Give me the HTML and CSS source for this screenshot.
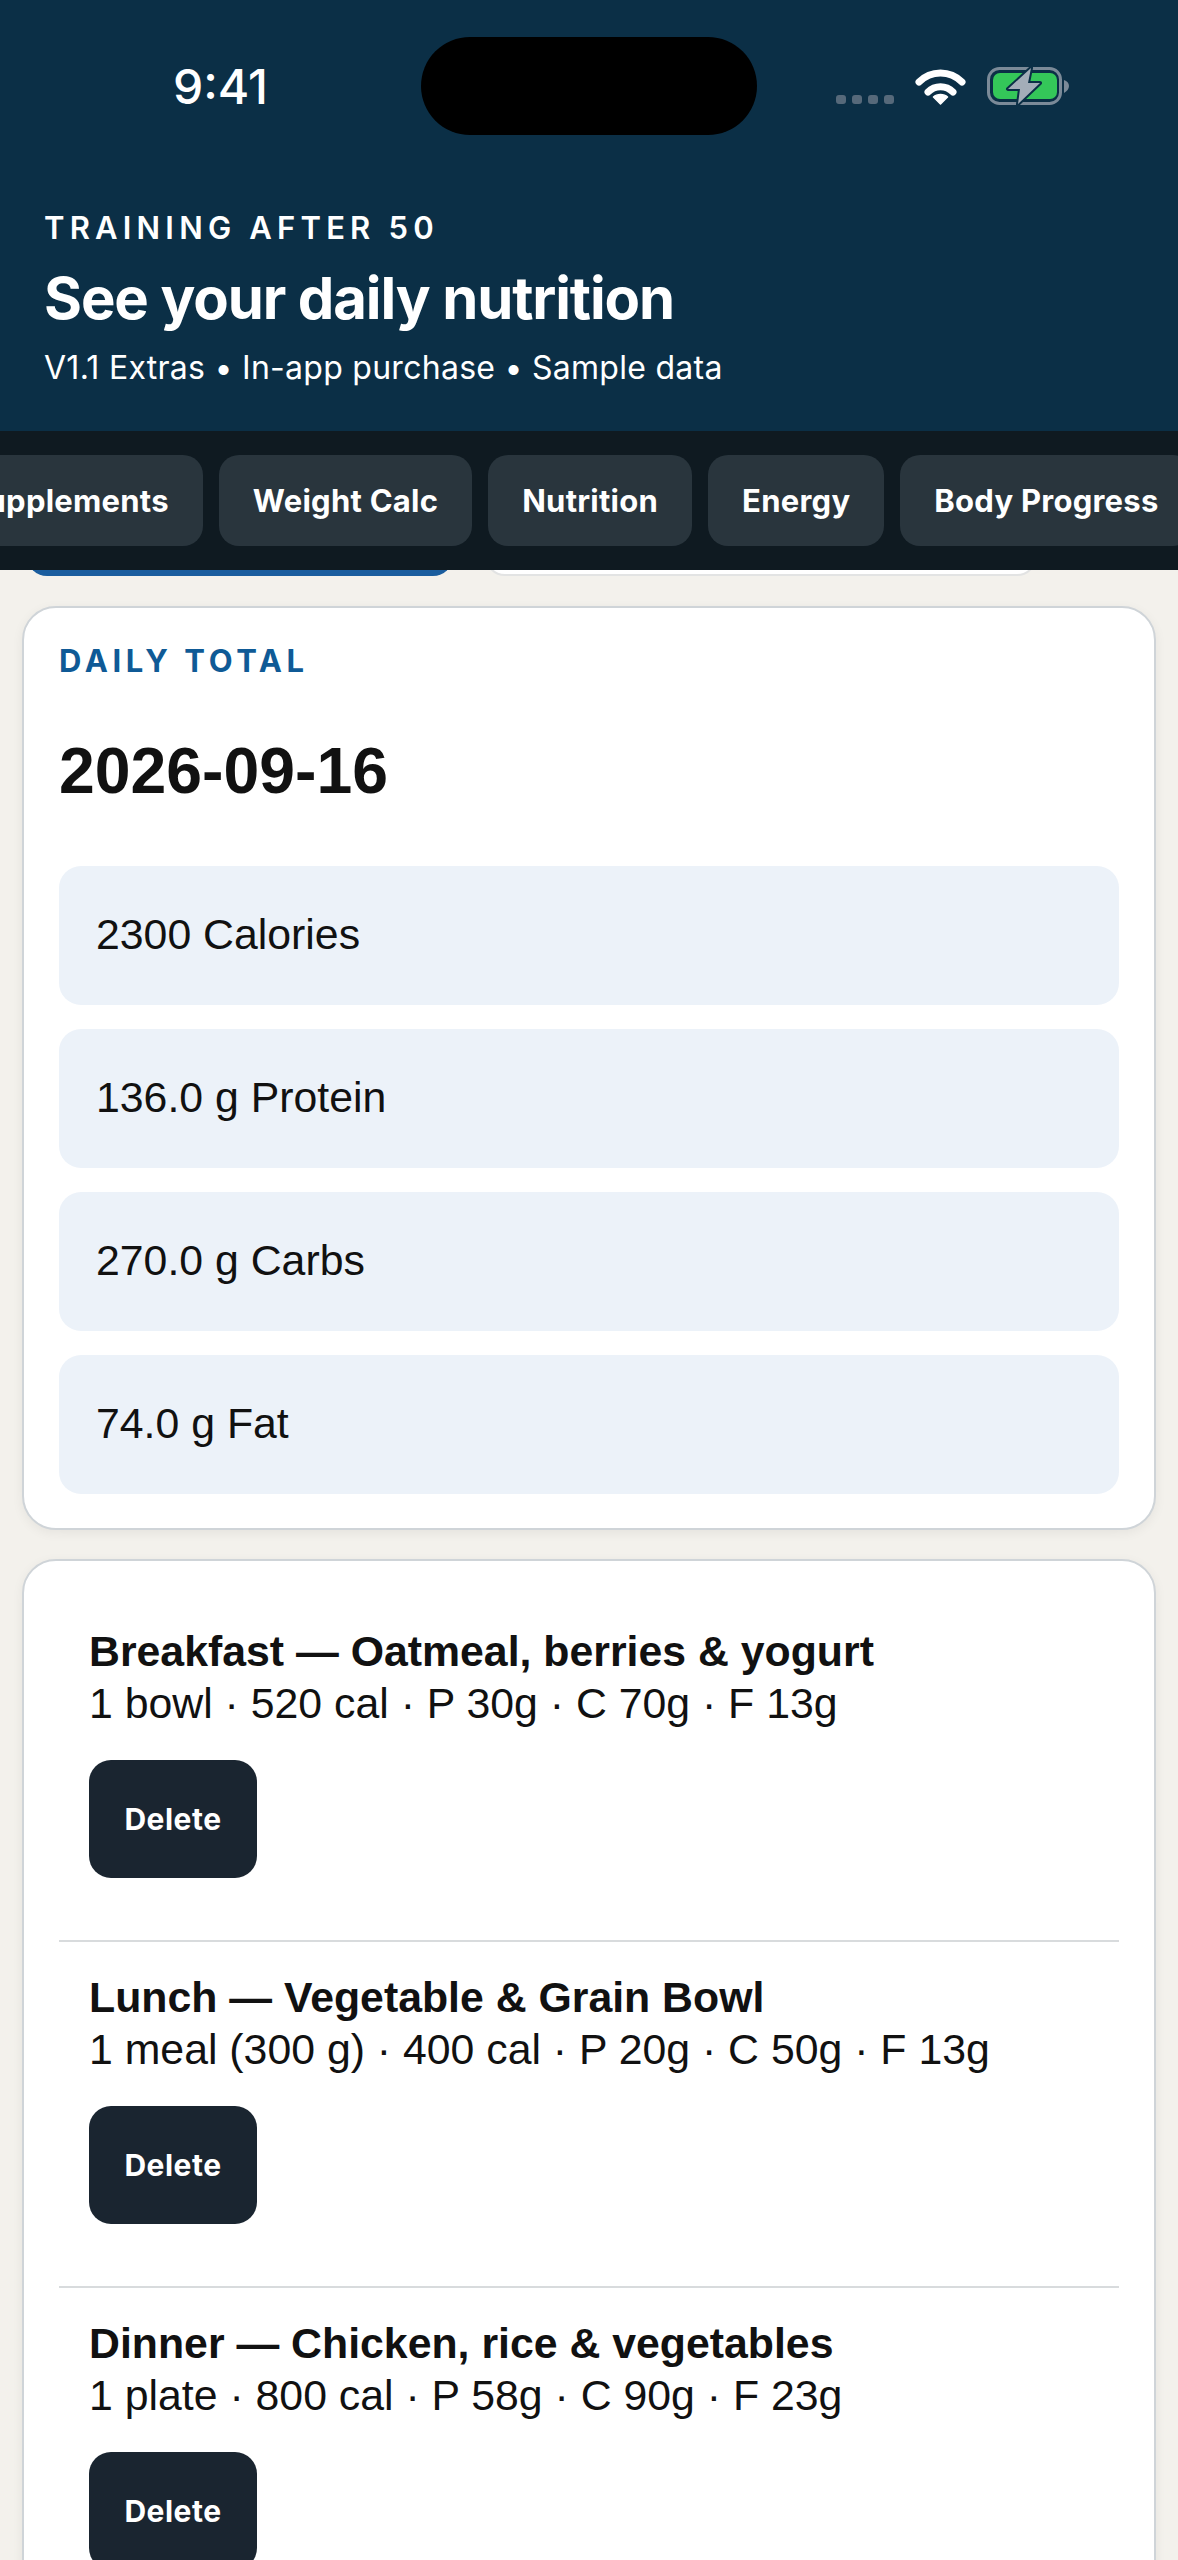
FILE: index.html
```html
<!DOCTYPE html>
<html lang="en">
<head>
    <meta charset="UTF-8">
    <meta name="viewport" content="width=device-width, initial-scale=1.0">
    <title>Training After 50</title>
    <link rel="stylesheet" href="styles.css">
</head>
<body>

<header class="hero">
    <div class="status-bar">
        <span class="status-time">9:41</span>
        <div class="status-island"></div>
        <div class="status-icons">
            <div class="signal-dots"><i></i><i></i><i></i><i></i></div>
            <svg class="wifi-icon" width="51" height="38" viewBox="0 0 51 38">
                <path d="M4 15 C16 3 35 3 47 15" fill="none" stroke="#fff" stroke-width="7" stroke-linecap="round"/>
                <path d="M13 25 C20 18 31 18 38 25" fill="none" stroke="#fff" stroke-width="7" stroke-linecap="round"/>
                <path d="M25.5 37 L18.5 30 C22 26.500 29 26.500 32.500 30 Z" fill="#fff" stroke="#fff" stroke-width="1.500" stroke-linejoin="round"/>
            </svg>
            <svg class="battery-icon" width="82" height="38" viewBox="0 0 82 38">
                <rect x="1.500" y="1.500" width="72" height="35" rx="11" fill="none" stroke="#7b8a98" stroke-width="3"/>
                <rect x="6" y="6" width="64" height="26" rx="7" fill="#34c759"/>
                <path d="M77 13 C80 14 82 16 82 19 C82 22 80 24 77 26 Z" fill="#7b8a98"/>
                <path d="M44 1 L21 22 L33 22 L31 37 L53 16 L41 16 Z" fill="#a3adb8" stroke="#0b2f46" stroke-width="4" stroke-linejoin="round" paint-order="stroke"/>
            </svg>
        </div>
    </div>
    <p class="hero-eyebrow">TRAINING AFTER 50</p>
    <h1 class="hero-title">See your daily nutrition</h1>
    <p class="hero-sub">V1.1 Extras • In-app purchase • Sample data</p>
</header>

<nav class="tabs">
    <div class="tab-track">
        <a class="tab">Supplements</a>
        <a class="tab">Weight Calc</a>
        <a class="tab">Nutrition</a>
        <a class="tab">Energy</a>
        <a class="tab">Body Progress</a>
    </div>
</nav>

<div class="peek-row">
    <div class="peek-primary"></div>
    <div class="peek-secondary"></div>
</div>

<main class="content">
    <section class="card">
        <p class="card-label">DAILY TOTAL</p>
        <h2 class="card-date">2026-09-16</h2>
        <div class="stat-list">
            <div class="stat-row">2300 Calories</div>
            <div class="stat-row">136.0 g Protein</div>
            <div class="stat-row">270.0 g Carbs</div>
            <div class="stat-row">74.0 g Fat</div>
        </div>
    </section>

    <section class="card meal-card">
        <div class="meal">
            <div class="meal-name">Breakfast — Oatmeal, berries &amp; yogurt</div>
            <div class="meal-info">1 bowl · 520 cal · P 30g · C 70g · F 13g</div>
            <button class="delete-btn">Delete</button>
        </div>
        <div class="meal">
            <div class="meal-name">Lunch — Vegetable &amp; Grain Bowl</div>
            <div class="meal-info">1 meal (300 g) · 400 cal · P 20g · C 50g · F 13g</div>
            <button class="delete-btn">Delete</button>
        </div>
        <div class="meal">
            <div class="meal-name">Dinner — Chicken, rice &amp; vegetables</div>
            <div class="meal-info">1 plate · 800 cal · P 58g · C 90g · F 23g</div>
            <button class="delete-btn">Delete</button>
        </div>
    </section>
</main>

</body>
</html>
```

FILE: styles.css
```css
html {
    height: 2560px;
    overflow: hidden;
}
body {
    margin: 0;
    height: 2560px;
    overflow: hidden;
    background-color: #f3f1ec;
    font-family: "Liberation Sans", Arial, sans-serif;
    color: #111;
}

/* header */
.hero {
    background-color: #0b2f46;
    color: #fff;
    height: 431px;
    padding: 37px 44px 0;
    box-sizing: border-box;
    font-family: Inter, sans-serif;
}
.status-bar {
    display: flex;
    align-items: center;
    height: 98px;
}
.status-time {
    width: 377px;
    box-sizing: border-box;
    padding-left: 129px;
    font-size: 48px;
    font-weight: 500;
}
.status-island {
    width: 336px;
    height: 98px;
    border-radius: 49px;
    background-color: #000;
}
.status-icons {
    display: flex;
    align-items: center;
    margin-left: 79px;
    gap: 21px;
    height: 38px;
}
.signal-dots {
    display: flex;
    gap: 6px;
    align-self: flex-end;
    margin-bottom: 1px;
}
.signal-dots i {
    display: block;
    width: 10px;
    height: 9px;
    border-radius: 3px;
    background-color: #56697a;
}
.hero-eyebrow {
    margin: 75px 0 0;
    font-size: 31px;
    line-height: 36px;
    font-weight: 600;
    letter-spacing: 5.200px;
}
.hero-title {
    margin: 18px 0 0;
    font-size: 58px;
    line-height: 68px;
    font-weight: 700;
    letter-spacing: -1.100px;
}
.hero-sub {
    margin: 17px 0 0;
    font-size: 32px;
    line-height: 38px;
    font-weight: 400;
    letter-spacing: 0.270px;
}

/* tabs */
.tabs {
    background-color: #0f1a21;
    height: 139px;
    box-sizing: border-box;
    padding: 24px 0;
    overflow: hidden;
    position: relative;
    z-index: 2;
}
.tab-track {
    display: flex;
    gap: 16px;
    margin-left: -68px;
    width: 1400px;
}
.tab {
    display: block;
    height: 91px;
    line-height: 91px;
    padding: 0 34px;
    border-radius: 20px;
    background-color: #29353d;
    color: #fff;
    font-family: Inter, sans-serif;
    font-size: 31px;
    font-weight: 700;
    letter-spacing: 0.250px;
    white-space: nowrap;
}

/* buttons that are mostly scrolled under the tabs */
.peek-row {
    display: flex;
    gap: 32px;
    height: 36px;
    margin-top: -40px;
    padding: 0 27px;
    margin-bottom: 40px;
}
.peek-primary {
    width: 426px;
    height: 46px;
    border-radius: 20px;
    background-color: #1a5d9e;
}
.peek-secondary {
    width: 552px;
    height: 46px;
    border-radius: 20px;
    background-color: #fff;
    border: 2px solid #e2e3e3;
    box-sizing: border-box;
}

/* cards */
.content {
    padding: 0 22px;
}
.card {
    background-color: #fff;
    border: 2px solid #cfd4d8;
    border-radius: 34px;
    padding: 31px 35px 34px;
    margin-bottom: 29px;
    box-shadow: 0 3px 12px rgba(0, 0, 0, 0.06);
}
.card-label {
    margin: 0;
    font-family: Inter, sans-serif;
    font-size: 31px;
    line-height: 44px;
    font-weight: 700;
    letter-spacing: 4.600px;
    color: #0f5a96;
}
.card-date {
    margin: 51px 0 0;
    font-size: 64.300px;
    line-height: 74px;
    font-weight: 700;
}
.stat-list {
    display: flex;
    flex-direction: column;
    gap: 24px;
    margin-top: 58px;
}
.stat-row {
    height: 139px;
    line-height: 137px;
    padding: 0 37px;
    border-radius: 22px;
    background-color: #ecf2f9;
    font-size: 42.800px;
}
.meal-card {
    padding-top: 35px;
    padding-bottom: 0;
}
.meal {
    padding: 29px 30px 62px;
    border-bottom: 2px solid #d8dbdd;
}
.meal-name {
    font-size: 42.800px;
    line-height: 52px;
    font-weight: 700;
}
.meal-info {
    font-size: 42.800px;
    line-height: 52px;
}
.delete-btn {
    display: block;
    margin-top: 31px;
    width: 168px;
    height: 118px;
    border: none;
    border-radius: 22px;
    background-color: #1a2530;
    color: #fff;
    font-family: Inter, sans-serif;
    font-size: 30px;
    font-weight: 700;
    letter-spacing: 0.500px;
}
```
